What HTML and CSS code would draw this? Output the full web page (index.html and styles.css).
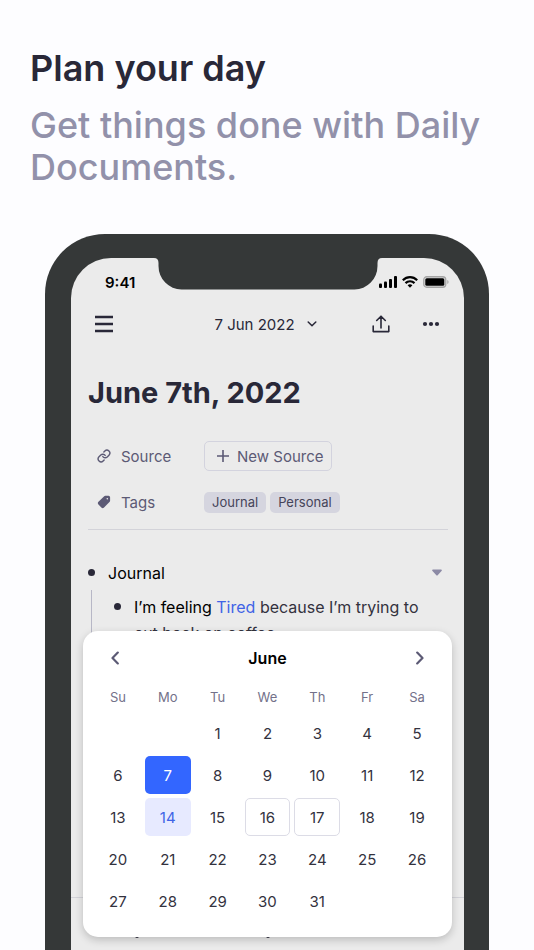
FILE: index.html
```html
<!DOCTYPE html>
<html lang="en">
<head>
<meta charset="utf-8">
<meta name="viewport" content="width=device-width, initial-scale=1">
<title>Plan your day</title>
<link rel="stylesheet" href="styles.css">
</head>
<body>
<header class="intro">
  <h1>Plan your day</h1>
  <p>Get things done with Daily Documents.</p>
</header>

<main class="phone">
  <div class="screen">
    <svg class="notch" width="228" height="32" viewBox="0 0 228 32" aria-hidden="true"><path fill="#353838" d="M0 0C3 0 4.500 1.500 4.500 5V8A23 23.500 0 0 0 27.500 31.500H200.500A23 23.500 0 0 0 223.500 8V5C223.500 1.500 225 0 228 0Z"/></svg>

    <div class="status">
      <span class="time">9:41</span>
      <span class="signals">
        <svg width="18" height="12" viewBox="0 0 18 12" aria-hidden="true"><rect x="0" y="7.500" width="3" height="4.500" rx="1"/><rect x="5" y="5.500" width="3" height="6.500" rx="1"/><rect x="10" y="3" width="3" height="9" rx="1"/><rect x="15" y="0" width="3" height="12" rx="1"/></svg>
        <svg width="16" height="12" viewBox="0 0 16 12" aria-hidden="true"><g fill="none" stroke="#000" stroke-width="2.200"><path d="M.8 4.200C5 .1 11 .1 15.200 4.200"/><path d="M3.500 7.100C6 4.600 10 4.600 12.500 7.100"/></g><path d="M5.600 9.200C7 8 9 8 10.400 9.200L8 11.700Z"/></svg>
        <svg width="26" height="12" viewBox="0 0 26 12" aria-hidden="true"><rect x=".75" y=".75" width="22" height="10.500" rx="3" fill="#ddd" stroke="#a5a5a5" stroke-width="1.300"/><rect x="2.300" y="2.300" width="19" height="7.400" rx="1.500"/><path fill="#a5a5a5" d="M24.300 4C26 4.600 26 7.400 24.300 8Z"/></svg>
      </span>
    </div>

    <nav class="toolbar">
      <button class="icon-button" aria-label="Menu"><svg width="18" height="18" viewBox="0 0 18 18"><path d="M0 2H18M0 9H18M0 16H18" fill="none" stroke="#292838" stroke-width="2.400"/></svg></button>
      <button class="date-button">7 Jun 2022<svg width="10" height="6" viewBox="0 0 10 6" aria-hidden="true"><path d="M1.200 1L5 4.800 8.800 1" fill="none" stroke="#292838" stroke-width="1.500" stroke-linecap="round" stroke-linejoin="round"/></svg></button>
      <div class="actions">
        <button class="icon-button" aria-label="Share"><svg width="18" height="18" viewBox="0 0 18 18"><path d="M9 13V1.500M4.700 5.500L9 1.200 13.300 5.500M1.200 11V16.600H16.800V11" fill="none" stroke="#292838" stroke-width="1.600" stroke-linecap="round" stroke-linejoin="round"/></svg></button>
        <button class="icon-button" aria-label="More"><svg width="18" height="18" viewBox="0 0 18 18" fill="#292838"><circle cx="3" cy="9" r="2.100"/><circle cx="9" cy="9" r="2.100"/><circle cx="15" cy="9" r="2.100"/></svg></button>
      </div>
    </nav>

    <article class="document">
      <h2>June 7th, 2022</h2>
      <dl class="fields">
        <div class="field">
          <dt><svg width="14" height="14" viewBox="0 0 24 24" fill="none" stroke="#5c5a75" stroke-width="2.400" stroke-linecap="round" stroke-linejoin="round" aria-hidden="true"><path d="M10 13a5 5 0 0 0 7.540.54l3-3a5 5 0 0 0-7.070-7.070l-1.720 1.710"/><path d="M14 11a5 5 0 0 0-7.540-.54l-3 3a5 5 0 0 0 7.070 7.070l1.710-1.710"/></svg>Source</dt>
          <dd><button class="new-source"><svg width="12" height="12" viewBox="0 0 12 12" aria-hidden="true"><path d="M6 0V12M0 6H12" stroke="#5c5a75" stroke-width="1.600"/></svg>New Source</button></dd>
        </div>
        <div class="field">
          <dt><svg width="14" height="14" viewBox="0 0 14 14" aria-hidden="true"><path fill="#5c5a75" fill-rule="evenodd" d="M7.200 1.200Q7.600.8 8.200.8H11.600Q13 .9 13.100 2.300V5.700Q13.100 6.300 12.700 6.700L6.800 12.700Q5.700 13.600 4.600 12.700L1.200 9.300Q.3 8.200 1.200 7.100ZM10.300 2.900A.7.700 0 1 0 10.310 2.900Z"/></svg>Tags</dt>
          <dd><a class="tag" href="#journal">Journal</a><a class="tag" href="#personal">Personal</a></dd>
        </div>
      </dl>
      <ul class="outline">
        <li>
          <div class="heading">Journal<button class="collapse" aria-label="Collapse"><svg width="10" height="8" viewBox="0 0 10 8"><path fill="#8c8aa5" d="M1 .5H9Q10.400.9 9.500 2.100L5.900 6Q5 7 4.100 6L.5 2.100Q-.4.9 1 .5Z"/></svg></button></div>
          <ul class="children">
            <li><span class="black">I’m feeling</span> <a href="#tired">Tired</a> because I’m trying to cut back on coffee.</li>
          </ul>
        </li>
      </ul>
    </article>

    <section class="sheet" aria-label="Calendar">
      <div class="month">
        <button class="icon-button" aria-label="Previous month"><svg width="8" height="14" viewBox="0 0 8 14"><path d="M6.800 1.600L1.500 7 6.800 12.400" fill="none" stroke="#5c5a75" stroke-width="2.200" stroke-linecap="round" stroke-linejoin="round"/></svg></button>
        <h3>June</h3>
        <button class="icon-button" aria-label="Next month"><svg width="8" height="14" viewBox="0 0 8 14"><path d="M1.200 1.600L6.500 7 1.200 12.400" fill="none" stroke="#5c5a75" stroke-width="2.200" stroke-linecap="round" stroke-linejoin="round"/></svg></button>
      </div>
      <table>
        <thead><tr><th>Su</th><th>Mo</th><th>Tu</th><th>We</th><th>Th</th><th>Fr</th><th>Sa</th></tr></thead>
        <tbody>
          <tr><td></td><td></td><td><button>1</button></td><td><button>2</button></td><td><button>3</button></td><td><button>4</button></td><td><button>5</button></td></tr>
          <tr><td><button>6</button></td><td><button class="selected">7</button></td><td><button>8</button></td><td><button>9</button></td><td><button>10</button></td><td><button>11</button></td><td><button>12</button></td></tr>
          <tr><td><button>13</button></td><td><button class="today">14</button></td><td><button>15</button></td><td><button class="outlined">16</button></td><td><button class="outlined">17</button></td><td><button>18</button></td><td><button>19</button></td></tr>
          <tr><td><button>20</button></td><td><button>21</button></td><td><button>22</button></td><td><button>23</button></td><td><button>24</button></td><td><button>25</button></td><td><button>26</button></td></tr>
          <tr><td><button>27</button></td><td><button>28</button></td><td><button>29</button></td><td><button>30</button></td><td><button>31</button></td><td></td><td></td></tr>
        </tbody>
      </table>
    </section>

    <div class="tabbar">
      <svg width="16" height="22" viewBox="0 0 16 22" aria-hidden="true"><circle cx="8" cy="20" r="2"/></svg>
      <svg width="16" height="22" viewBox="0 0 16 22" aria-hidden="true"><circle cx="8" cy="20" r="2"/></svg>
      <svg width="16" height="22" viewBox="0 0 16 22" aria-hidden="true"></svg>
    </div>
  </div>
</main>
</body>
</html>
```
FILE: styles.css
```css
* { box-sizing: border-box; }

body {
  margin: 0;
  min-height: 100vh;
  display: flex;
  flex-direction: column;
  background: #fdfdff;
  color: #292838;
  font-family: Inter, "Liberation Sans", sans-serif;
}

h1, h2, h3, p, ul, dl, dd { margin: 0; padding: 0; }
ul { list-style: none; }
a { color: inherit; text-decoration: none; }

button {
  padding: 0;
  border: 0;
  background: none;
  color: inherit;
  font: inherit;
  cursor: pointer;
}

svg { display: block; flex: none; }

.intro { padding: 46px 30px; }
.intro h1 { font-size: 36px; line-height: 44px; font-weight: 600; }
.intro p {
  margin-top: 14px;
  color: #9291aa;
  font-size: 36px;
  line-height: 42px;
  font-weight: 500;
}

.phone {
  flex: 1;
  display: flex;
  margin: 0 45px;
  padding: 24px 25px 0 26px;
  border-radius: 60px 60px 0 0;
  background: #353838;
}

.screen {
  position: relative;
  flex: 1;
  min-width: 0;
  display: flex;
  flex-direction: column;
  border-radius: 40px 40px 0 0;
  background: #ebebeb;
}

.notch { position: absolute; top: 0; left: 50%; margin-left: -114px; }

.status {
  display: flex;
  align-items: center;
  justify-content: space-between;
  height: 48px;
  padding: 0 15px 0 34px;
  color: #000;
}
.time { font-size: 15px; font-weight: 600; }
.signals { display: flex; gap: 5px; }

.toolbar {
  display: grid;
  grid-template-columns: 1fr auto 1fr;
  align-items: center;
  height: 36px;
  padding: 0 24px;
}
.icon-button { display: flex; justify-content: center; }
.toolbar > .icon-button { justify-self: start; }
.date-button { display: flex; align-items: center; gap: 12px; padding-right: 4px; font-size: 15px; }
.actions { display: flex; justify-content: flex-end; gap: 32px; }

.document { padding: 32px 16px 0 17px; }
.document h2 { font-size: 29px; line-height: 38px; font-weight: 700; }

.fields {
  display: grid;
  gap: 16px;
  margin-top: 29px;
  padding-bottom: 12px;
  border-bottom: 1px solid #d3d3d9;
}
.field { display: flex; align-items: center; height: 30px; padding-left: 9px; color: #5c5a75; font-size: 15px; }
.field dt { display: flex; align-items: center; gap: 10px; width: 107px; }
.field dd { display: flex; gap: 4px; }
.new-source {
  display: flex;
  align-items: center;
  gap: 8px;
  height: 30px;
  padding: 0 8px 0 12px;
  border: 1px solid #d3d3de;
  border-radius: 5px;
}
.tag {
  padding: 0 8px;
  border-radius: 5px;
  background: #d5d5df;
  color: #454459;
  font-size: 13px;
  line-height: 21px;
}

.outline { margin-top: 30px; color: #33323e; font-size: 16px; line-height: 26px; }
.outline li { position: relative; }
.outline li::before {
  content: "";
  position: absolute;
  top: 9px;
  left: 0;
  width: 7px;
  height: 7px;
  border-radius: 50%;
  background: #292838;
}
.heading { display: flex; align-items: center; justify-content: space-between; padding: 0 6px 0 20px; color: #000; }
.children { margin: 4px 0 0 3px; padding: 4px 10px 0 22px; border-left: 1px solid #b7b7c6; }
.children li { padding-left: 20px; }
.children a { color: #4063e6; }
.black { color: #000; }

.sheet {
  position: absolute;
  right: 12px;
  bottom: 13px;
  left: 12px;
  padding: 15px 8px 13px;
  border-radius: 15px;
  background: #fff;
  box-shadow: 0 3px 8px rgba(0, 0, 0, .2);
}
.month { display: flex; align-items: center; justify-content: space-between; height: 24px; padding: 0 20px; }
.month h3 { color: #000; font-size: 16px; font-weight: 600; }

table { width: 100%; table-layout: fixed; border-spacing: 4px; }
th { height: 36px; padding: 10px 0 0; color: #73718a; font-size: 13px; font-weight: 400; }
td { height: 38px; padding: 0; }
td button {
  display: block;
  width: 100%;
  height: 38px;
  border-radius: 5px;
  color: #33323e;
  font-size: 15px;
}
td .selected { background: #3366ff; color: #fff; }
td .today { background: #e7eaff; color: #4063e6; }
td .outlined { border: 1px solid #dcdce6; }

.tabbar {
  display: flex;
  justify-content: space-around;
  height: 53px;
  margin-top: auto;
  padding-top: 18px;
  border-top: 1px solid #d3d3d9;
  color: #292838;
}
.tabbar svg { fill: currentColor; }
```
